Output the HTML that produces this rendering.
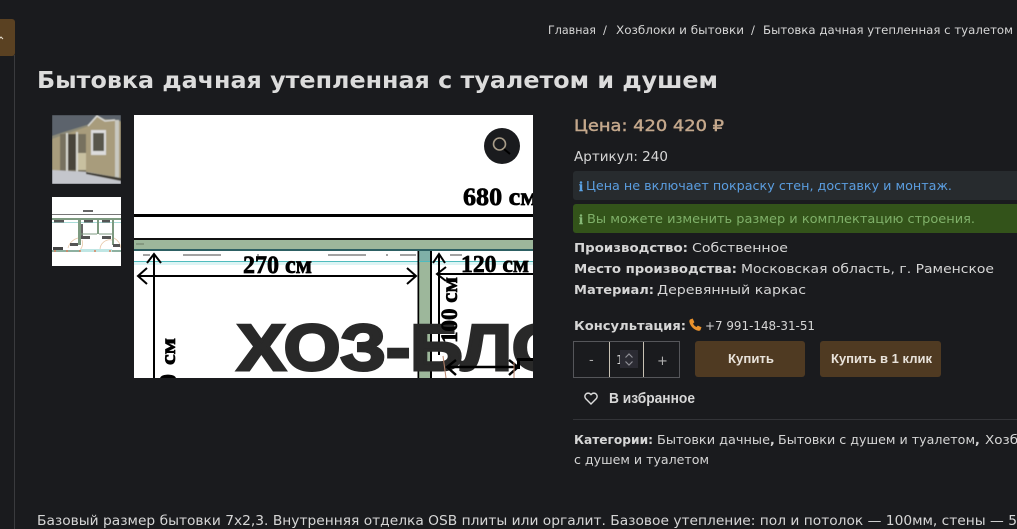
<!DOCTYPE html>
<html lang="ru"><head><meta charset="utf-8"><title>Бытовка дачная утепленная с туалетом и душем</title>
<style>
html,body{margin:0;padding:0;background:#1a1b1e;width:1017px;height:529px;overflow:hidden}
svg{display:block}
text{font-family:"DejaVu Sans","Liberation Sans",sans-serif;font-size:12px;fill:#d6d6d6;white-space:pre}
.b{font-weight:700}
.lb{font-family:"Liberation Sans",sans-serif;font-weight:700}
.s{font-family:"Liberation Serif",serif;font-weight:700;fill:#000;stroke:#000;stroke-width:.7}
</style></head><body>
<svg width="1017" height="529" viewBox="0 0 1017 529" xmlns="http://www.w3.org/2000/svg">
<defs>
<clipPath id="m"><rect x="134" y="115" width="399" height="263"/></clipPath>
<clipPath id="t1"><rect x="52" y="115" width="69" height="69"/></clipPath>
<clipPath id="t2"><rect x="52" y="197" width="69" height="69"/></clipPath>
<filter id="bl"><feGaussianBlur stdDeviation=".6"/></filter>
<filter id="bl2"><feGaussianBlur stdDeviation=".35"/></filter>
</defs>
<rect width="1017" height="529" fill="#1a1b1e"/>
<!-- sidebar -->
<rect x="14" y="55" width="1" height="474" fill="#3a3b3e"/>
<path d="M0 19h12a3 3 0 0 1 3 3v31a3 3 0 0 1-3 3H0z" fill="#5a4122"/>
<path d="M-1 39l2-2 2 2" fill="none" stroke="#e8e0d0" stroke-width="1"/>
<!-- breadcrumb -->
<text x="548" y="34" textLength="48" lengthAdjust="spacingAndGlyphs" style="font-size:11.5px">Главная</text>
<text x="603" y="34" style="font-size:11.5px">/</text>
<text x="616" y="34" textLength="128" lengthAdjust="spacingAndGlyphs" style="font-size:11.5px">Хозблоки и бытовки</text>
<text x="751" y="34" style="font-size:11.5px">/</text>
<text x="763" y="34" textLength="250" lengthAdjust="spacingAndGlyphs" style="font-size:11.5px">Бытовка дачная утепленная с туалетом</text>
<!-- title -->
<text x="37" y="88" class="b" textLength="681" lengthAdjust="spacingAndGlyphs" style="font-size:23.5px;fill:#dcdcdc">Бытовка дачная утепленная с туалетом и душем</text>
<!-- thumb 1 house -->
<g clip-path="url(#t1)"><g filter="url(#bl)">
<rect x="52" y="115" width="69" height="69" fill="#8c8a78"/>
<path d="M52 115h69v6l-8-1-9-1-7-3-7 8-26 8-12 4z" fill="#5c646c"/>
<path d="M52 139l37-13 8-10 7 5 10-1 7 2v59l-33-6H52z" fill="#a89c7c"/>
<path d="M88 126l9-10 8 5 10-1" fill="none" stroke="#d8d8d4" stroke-width="1.500"/>
<rect x="115" y="120" width="4" height="58" fill="#c8c8c0"/>
<rect x="91" y="130" width="15" height="25" fill="#dcdcdc"/><rect x="93" y="133" width="11" height="18" fill="#59564c"/>
<rect x="60" y="134" width="26" height="38" fill="#77715e"/>
<rect x="68" y="134" width="8" height="36" fill="#4a443a"/>
<rect x="66" y="133" width="2" height="38" fill="#d8d8d0"/><rect x="76" y="132" width="2" height="40" fill="#d8d8d0"/>
<rect x="78" y="153" width="8" height="17" fill="#c8c0a0"/>
<path d="M52 170l36 2 33 6v6H52z" fill="#c4c6cc"/>
<path d="M86 172l35 6v3l-35-7z" fill="#3e3a30"/>
</g></g>
<!-- thumb 2 plan -->
<rect x="52" y="197" width="69" height="69" fill="#fff"/>
<g clip-path="url(#t2)"><g filter="url(#bl2)">
<rect x="52" y="214" width="69" height="1" fill="#777"/>
<rect x="83" y="210" width="10" height="2" fill="#666"/>
<rect x="52" y="218" width="69" height="2" fill="#7d9a80"/>
<rect x="52" y="222" width="69" height="1" fill="#a8dcd8"/>
<rect x="54" y="220" width="10" height="2.500" fill="#555"/><rect x="84" y="220" width="9" height="2.500" fill="#555"/><rect x="102" y="220" width="8" height="2.500" fill="#555"/>
<rect x="78" y="219" width="3" height="26" fill="#7d9a80"/><rect x="97" y="219" width="2" height="15" fill="#7d9a80"/><rect x="112" y="219" width="2" height="26" fill="#7d9a80"/>
<rect x="81" y="224" width="2" height="12" fill="#666"/>
<path d="M81 234h16M99 234h13" stroke="#7d9a80" stroke-width="1"/>
<rect x="81" y="236" width="9" height="3" fill="#555"/><rect x="102" y="236" width="9" height="3" fill="#555"/>
<path d="M68 248a14 14 0 0 1 10-10M82 240a10 10 0 0 1 -2 10M112 240a10 10 0 0 0 -12 10M114 238a14 14 0 0 1 7 10" fill="none" stroke="#e8c8a8" stroke-width=".8"/>
<rect x="70" y="243" width="8" height="3" fill="#555"/><rect x="113" y="244" width="7" height="3" fill="#555"/>
<rect x="53" y="247" width="10" height="3" fill="#444"/>
<path d="M52 251h69" stroke="#8db0a0" stroke-width="2"/>
<rect x="80" y="249" width="32" height="3" fill="#bfe6e4"/>
<path d="M54 251h2M66 251h2M79 251h2M94 251h2M109 251h2" stroke="#d9805a" stroke-width="1.400"/>
</g></g>
<!-- main image -->
<rect x="134" y="115" width="399" height="263" fill="#fff"/>
<g clip-path="url(#m)">
<text x="463" y="205" class="s" textLength="75" lengthAdjust="spacingAndGlyphs" style="font-size:25px">680 см</text>
<rect x="134" y="214" width="399" height="3" fill="#000"/>
<rect x="134" y="238" width="399" height="2.500" fill="#111"/>
<rect x="134" y="240" width="399" height="9" fill="#9db79b"/>
<rect x="134" y="249" width="399" height="2" fill="#2d6063"/>
<path d="M136 244h8" stroke="#6b7b66" stroke-width="1"/>
<path d="M143 255h7M183 255h38M257 255h2M328 255h38M386 255h2M400 255h16M450 255h12" stroke="#444" stroke-width="1"/>
<rect x="134" y="261" width="399" height="1" fill="#4fbcbe"/>
<rect x="134" y="262" width="399" height="3" fill="#dcf4f4"/>
<!-- 270 -->
<text x="243" y="273" class="s" textLength="69" lengthAdjust="spacingAndGlyphs" style="font-size:25px">270 см</text>
<path d="M138 276H416M147 268l-9 8 9 8M407 268l9 8-9 8" fill="none" stroke="#000" stroke-width="2"/>
<path d="M154 378V254M147 263l7-9 7 9" fill="none" stroke="#000" stroke-width="2"/>
<text transform="translate(175 365) rotate(-90)" class="s" textLength="27" lengthAdjust="spacingAndGlyphs" style="font-size:21px">см</text>
<text transform="translate(176 386) rotate(-90)" class="s" style="font-size:24px">0</text>
<!-- wall -->
<rect x="419" y="251" width="11" height="127" fill="#9db79b"/>
<rect x="419" y="251" width="11" height="10" fill="#7fb0a8"/>
<rect x="417.500" y="251" width="1.700" height="127" fill="#000"/>
<rect x="430" y="251" width="2" height="127" fill="#000"/>
<path d="M419 261.500h11" stroke="#4fbcbe"/>
<!-- 120 -->
<text x="461" y="272" class="s" textLength="68" lengthAdjust="spacingAndGlyphs" style="font-size:24px">120 см</text>
<path d="M437 274H533M446 267l-9 7 9 7" fill="none" stroke="#000" stroke-width="2"/>
<path d="M439 355V254M433 263l6-9 6 9" fill="none" stroke="#000" stroke-width="2"/>
<!-- watermark -->
<text x="237" y="370" class="lb" textLength="376" lengthAdjust="spacingAndGlyphs" style="font-size:65px;fill:#292929;stroke:#292929;stroke-width:3">ХОЗ-БЛОК</text>
<text transform="translate(457 343) rotate(-90)" class="s" textLength="66" lengthAdjust="spacingAndGlyphs" style="font-size:23px">100 см</text>
<path d="M447 367H518M456 360l-9 7 9 8M509 360l9 7-9 8" fill="none" stroke="#000" stroke-width="2.400"/>
<path d="M517 358H533V361H520V369H517z" fill="#000"/>
<path d="M443 356l3 22M514 362v16" stroke="#b8836a" stroke-width="1"/>
</g>
<!-- zoom button -->
<circle cx="502" cy="146" r="18" fill="#1a1b1e"/>
<circle cx="499.500" cy="144" r="6" fill="none" stroke="#a89c88" stroke-width="1.600"/>
<path d="M504 149l6 5" stroke="#000" stroke-width="2"/>
<!-- right column -->
<text x="574" y="131" textLength="150" lengthAdjust="spacingAndGlyphs" style="font-size:16px;fill:#c4a88c;stroke:#c4a88c;stroke-width:.45">Цена: 420 420 ₽</text>
<text x="574" y="161" textLength="94" lengthAdjust="spacingAndGlyphs" style="font-size:13px">Артикул: 240</text>
<rect x="573" y="171" width="460" height="29" rx="3" fill="#272b2e"/>
<rect x="573" y="204" width="460" height="29" rx="3" fill="#33531a"/>
<text x="579" y="191" class="b" style="font-size:14px;fill:#5ba3e6;stroke:#5ba3e6;stroke-width:.4;font-family:'Liberation Serif',serif">i</text>
<text x="586" y="190" textLength="366" lengthAdjust="spacingAndGlyphs" style="font-size:12.500px;fill:#5b9ee0">Цена не включает покраску стен, доставку и монтаж.</text>
<text x="579" y="224" class="b" style="font-size:14px;fill:#86b877;stroke:#86b877;stroke-width:.4;font-family:'Liberation Serif',serif">i</text>
<text x="587" y="223" textLength="388" lengthAdjust="spacingAndGlyphs" style="font-size:12.500px;fill:#7fb069">Вы можете изменить размер и комплектацию строения.</text>
<text x="574" y="252" class="b" textLength="114" lengthAdjust="spacingAndGlyphs" style="font-size:12.500px">Производство:</text>
<text x="692" y="252" textLength="96" lengthAdjust="spacingAndGlyphs" style="font-size:12.500px">Собственное</text>
<text x="574" y="273" class="b" textLength="163" lengthAdjust="spacingAndGlyphs" style="font-size:12.500px">Место производства:</text>
<text x="741" y="273" textLength="253" lengthAdjust="spacingAndGlyphs" style="font-size:12.500px">Московская область, г. Раменское</text>
<text x="574" y="294" class="b" textLength="80" lengthAdjust="spacingAndGlyphs" style="font-size:12.500px">Материал:</text>
<text x="657" y="294" textLength="149" lengthAdjust="spacingAndGlyphs" style="font-size:12.500px">Деревянный каркас</text>
<text x="574" y="330" class="b" textLength="112" lengthAdjust="spacingAndGlyphs" style="font-size:12.500px">Консультация:</text>
<path d="M690 319.500l2.700-1 1.700 3.700-1.400 1.300c.7 1.600 1.900 2.800 3.500 3.500l1.300-1.400 3.700 1.700-1 2.700c-.4.600-1.300.9-2.200.8-4.300-.8-8.100-4.600-8.900-8.900-.1-1 .1-1.800.6-2.400z" fill="#e8912c"/>
<text x="705" y="330" textLength="110" lengthAdjust="spacingAndGlyphs" style="font-size:12.500px">+7 991-148-31-51</text>
<!-- qty -->
<rect x="573.500" y="341.500" width="106" height="36" fill="none" stroke="#55565a"/>
<rect x="609" y="342" width="1" height="35" fill="#c8c2b4"/>
<rect x="643" y="342" width="1" height="35" fill="#c8c2b4"/>
<text x="589" y="364" style="font-size:13px;fill:#b0b0b0">-</text>
<text x="657" y="365" style="font-size:13px;fill:#b0b0b0">+</text>
<text x="616" y="364" style="font-size:12px">1</text>
<rect x="620" y="350" width="18" height="18" fill="#2b2b33"/>
<path d="M625.500 357.500l3.500-3.500 3.500 3.500M625.500 361.500l3.500 3.500 3.500-3.500" fill="none" stroke="#8f8f96" stroke-width="1.200"/>
<!-- buttons -->
<rect x="695" y="341" width="110" height="36" rx="3" fill="#4f3a22"/>
<rect x="820" y="341" width="121" height="36" rx="3" fill="#4f3a22"/>
<text x="728" y="363" class="lb" textLength="46" lengthAdjust="spacingAndGlyphs" style="font-size:13px;fill:#e8e2da">Купить</text>
<text x="831" y="363" class="lb" textLength="101" lengthAdjust="spacingAndGlyphs" style="font-size:13px;fill:#e8e2da">Купить в 1 клик</text>
<!-- fav -->
<path d="M591 404l-5.200-5.300a3.300 3.300 0 0 1 0-4.600 3.300 3.300 0 0 1 4.700 0l.5.500.5-.5a3.300 3.300 0 0 1 4.700 0 3.300 3.300 0 0 1 0 4.600z" fill="none" stroke="#dcdcdc" stroke-width="1.400"/>
<text x="609" y="403" class="lb" textLength="86" lengthAdjust="spacingAndGlyphs" style="font-size:14.500px;fill:#d8d8d8">В избранное</text>
<rect x="573" y="419" width="444" height="1" fill="#333438"/>
<text x="574" y="444" class="b" textLength="79" lengthAdjust="spacingAndGlyphs" style="font-size:12.500px">Категории:</text>
<text x="657" y="444" textLength="113" lengthAdjust="spacingAndGlyphs" style="font-size:12.500px">Бытовки дачные</text>
<text x="770" y="444" class="b" style="font-size:12.500px">,</text>
<text x="778" y="444" textLength="197" lengthAdjust="spacingAndGlyphs" style="font-size:12.500px">Бытовки с душем и туалетом</text>
<text x="975" y="444" class="b" style="font-size:12.500px">,</text>
<text x="985" y="444" textLength="67" lengthAdjust="spacingAndGlyphs" style="font-size:12.500px">Хозблоки</text>
<text x="574" y="464" textLength="135" lengthAdjust="spacingAndGlyphs" style="font-size:12.500px">с душем и туалетом</text>
<text x="37" y="525" textLength="980" lengthAdjust="spacingAndGlyphs" style="font-size:13px">Базовый размер бытовки 7х2,3. Внутренняя отделка OSB плиты или оргалит. Базовое утепление: пол и потолок — 100мм, стены — 5</text>
</svg>
</body></html>
